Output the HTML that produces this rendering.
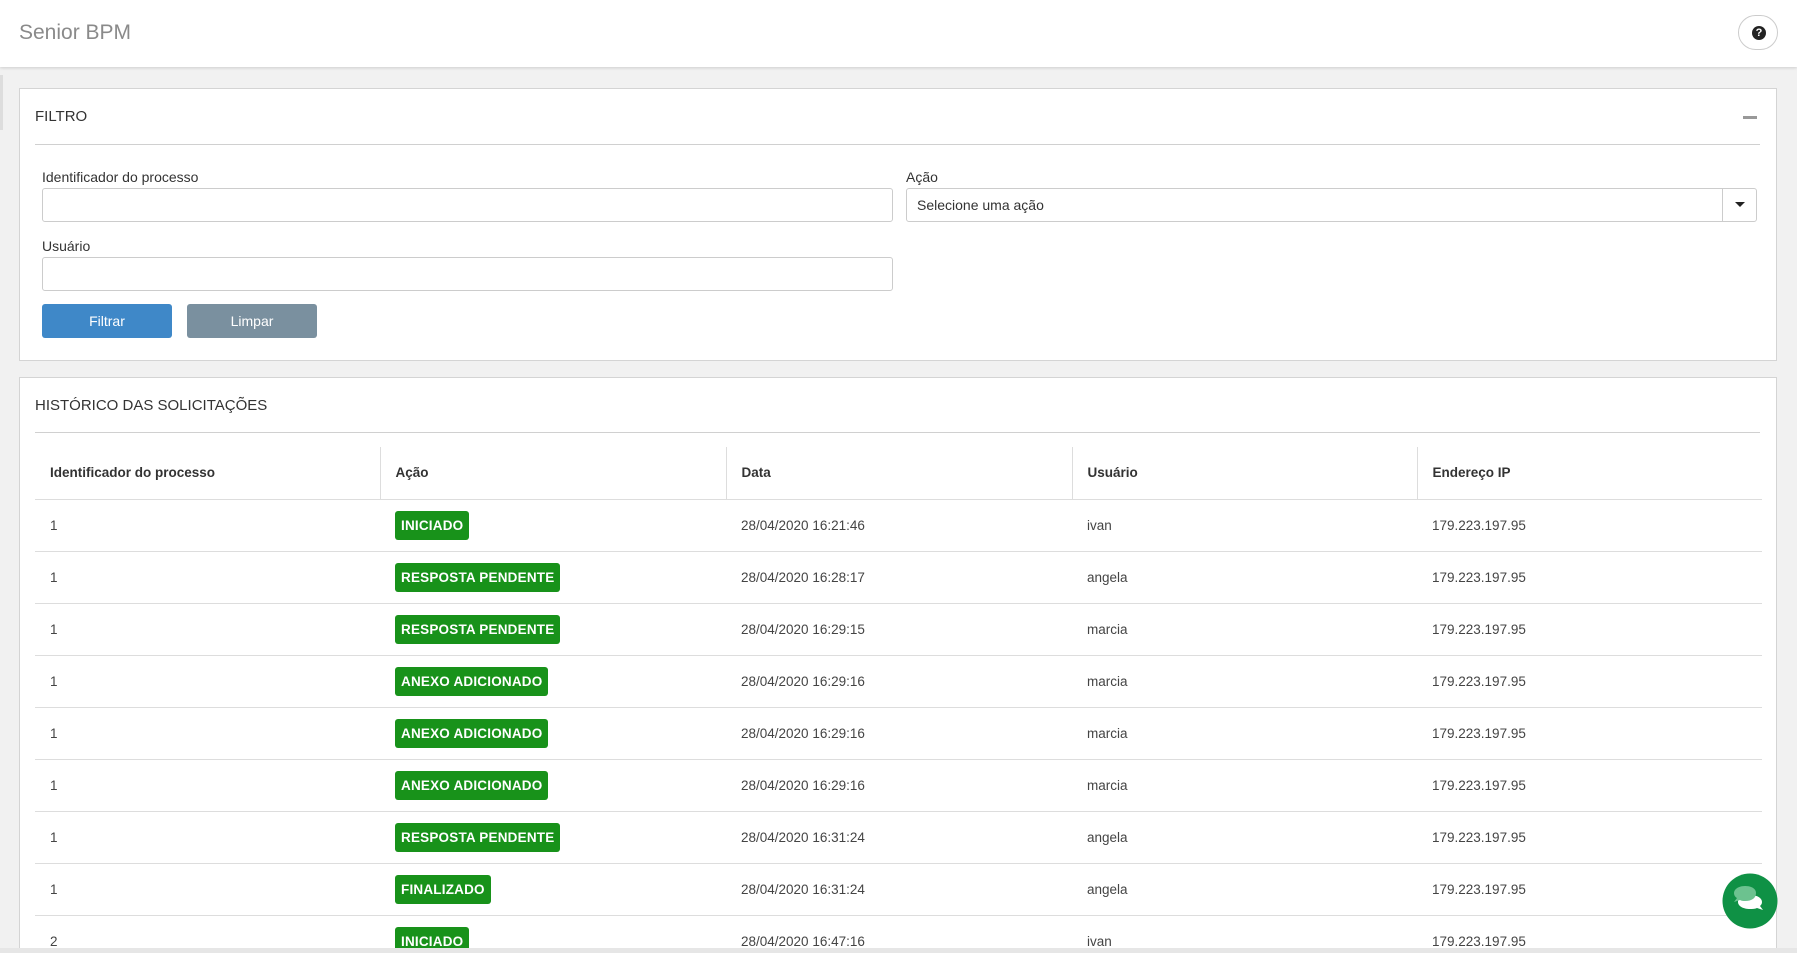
<!DOCTYPE html>
<html><head><meta charset="utf-8"><style>
*{box-sizing:border-box;margin:0;padding:0}
html,body{width:1797px;height:953px;overflow:hidden}
body{background:#f1f1f1;font-family:"Liberation Sans","DejaVu Sans",sans-serif;color:#333;position:relative}
.hdr{position:absolute;left:0;top:0;width:1797px;height:67px;background:#fff;box-shadow:0 1px 3px rgba(0,0,0,.15);z-index:2}
.hdr .t{position:absolute;left:19px;top:21px;font-size:21px;color:#8a8a8a}
.help{position:absolute;left:1738px;top:15px;width:40px;height:35px;border:1px solid #ccc;border-radius:18px;background:#fff}
.help span{position:absolute;left:13px;top:10px;width:14px;height:14px;border-radius:50%;background:#222;color:#fff;font-size:11px;font-weight:bold;text-align:center;line-height:14px}
.panel{position:absolute;left:19px;width:1758px;background:#fff;border:1px solid #d4d4d4;overflow:hidden}
.ptitle{position:absolute;left:15px;font-size:15px;color:#333}
.hr{position:absolute;left:15px;right:16px;height:1px;background:#d0d0d0}
.lbl{position:absolute;font-size:14px;color:#333}
.inp{position:absolute;height:34px;border:1px solid #ccc;border-radius:3px;background:#fff;width:851px}
.btn{position:absolute;top:215px;width:130px;height:34px;border-radius:3px;color:#fff;font-size:14px;text-align:center;line-height:34px}
table{position:absolute;left:15px;top:69px;width:1727px;border-collapse:collapse;font-size:13.5px}
th{height:52px;text-align:left;font-weight:bold;padding-left:15px;border-bottom:1px solid #ddd;border-left:1px solid #ddd}
th:first-child{border-left:none}
td{height:52px;padding-left:15px;border-bottom:1px solid #ddd;color:#444}
.b{display:inline-block;background:#18921a;color:#fff;font-weight:bold;font-size:13.5px;padding:0 6px;height:29px;line-height:29px;border-radius:3px;letter-spacing:.2px}
</style></head><body>
<div class="hdr"><div class="t">Senior BPM</div><div class="help"><span>?</span></div></div>
<div style="position:absolute;left:0;top:75px;width:3px;height:55px;background:#ddd"></div>
<div class="panel" style="top:88px;height:273px">
 <div class="ptitle" style="top:19px">FILTRO</div>
 <div style="position:absolute;left:1723px;top:27px;width:14px;height:3px;background:#999"></div>
 <div class="hr" style="top:55px"></div>
 <div class="lbl" style="left:22px;top:80px">Identificador do processo</div>
 <div class="inp" style="left:22px;top:99px"></div>
 <div class="lbl" style="left:886px;top:80px">Ação</div>
 <div class="inp" style="left:886px;top:99px"><span style="position:absolute;left:10px;top:8px;font-size:14px;color:#333">Selecione uma ação</span><div style="position:absolute;right:0;top:0;width:34px;height:32px;border-left:1px solid #ccc"><div style="position:absolute;left:12px;top:13px;border-left:5px solid transparent;border-right:5px solid transparent;border-top:5px solid #222"></div></div></div>
 <div class="lbl" style="left:22px;top:149px">Usuário</div>
 <div class="inp" style="left:22px;top:168px"></div>
 <div class="btn" style="left:22px;background:#3f88c8">Filtrar</div>
 <div class="btn" style="left:167px;background:#7a909f">Limpar</div>
</div>
<div class="panel" style="top:377px;height:576px;border-bottom:none">
 <div class="ptitle" style="top:19px">HISTÓRICO DAS SOLICITAÇÕES</div>
 <div class="hr" style="top:54px"></div>
 <table>
 <colgroup><col style="width:345px"><col style="width:346px"><col style="width:346px"><col style="width:345px"><col></colgroup>
 <tr><th>Identificador do processo</th><th>Ação</th><th>Data</th><th>Usuário</th><th>Endereço IP</th></tr>
 <tr><td>1</td><td><span class="b">INICIADO</span></td><td>28/04/2020 16:21:46</td><td>ivan</td><td>179.223.197.95</td></tr>
 <tr><td>1</td><td><span class="b">RESPOSTA PENDENTE</span></td><td>28/04/2020 16:28:17</td><td>angela</td><td>179.223.197.95</td></tr>
 <tr><td>1</td><td><span class="b">RESPOSTA PENDENTE</span></td><td>28/04/2020 16:29:15</td><td>marcia</td><td>179.223.197.95</td></tr>
 <tr><td>1</td><td><span class="b">ANEXO ADICIONADO</span></td><td>28/04/2020 16:29:16</td><td>marcia</td><td>179.223.197.95</td></tr>
 <tr><td>1</td><td><span class="b">ANEXO ADICIONADO</span></td><td>28/04/2020 16:29:16</td><td>marcia</td><td>179.223.197.95</td></tr>
 <tr><td>1</td><td><span class="b">ANEXO ADICIONADO</span></td><td>28/04/2020 16:29:16</td><td>marcia</td><td>179.223.197.95</td></tr>
 <tr><td>1</td><td><span class="b">RESPOSTA PENDENTE</span></td><td>28/04/2020 16:31:24</td><td>angela</td><td>179.223.197.95</td></tr>
 <tr><td>1</td><td><span class="b">FINALIZADO</span></td><td>28/04/2020 16:31:24</td><td>angela</td><td>179.223.197.95</td></tr>
 <tr><td>2</td><td><span class="b">INICIADO</span></td><td>28/04/2020 16:47:16</td><td>ivan</td><td>179.223.197.95</td></tr>
 </table>
</div>
<div style="position:absolute;left:0;top:948px;width:1797px;height:5px;background:#e6e6e6;z-index:3"></div>
<svg style="position:absolute;left:1722px;top:873px;z-index:4" width="56" height="56" viewBox="0 0 56 56">
<circle cx="28" cy="28" r="27.5" fill="#0f9145"/>
<path d="M28 22c7 0 12 3 12 7 0 2-1 3-2 4l3 4-6-2c-2 1-5 1-7 1-7 0-12-3-12-7s5-7 12-7z" fill="#fff"/>
<path d="M23 13c-6 0-11 3-11 7 0 2 1 4 3 5l-3 4 6-2c2 1 3 1 5 1 7 0 11-3 11-8 0-4-4-7-11-7z" fill="#6cc28f"/>
</svg>
</body></html>
